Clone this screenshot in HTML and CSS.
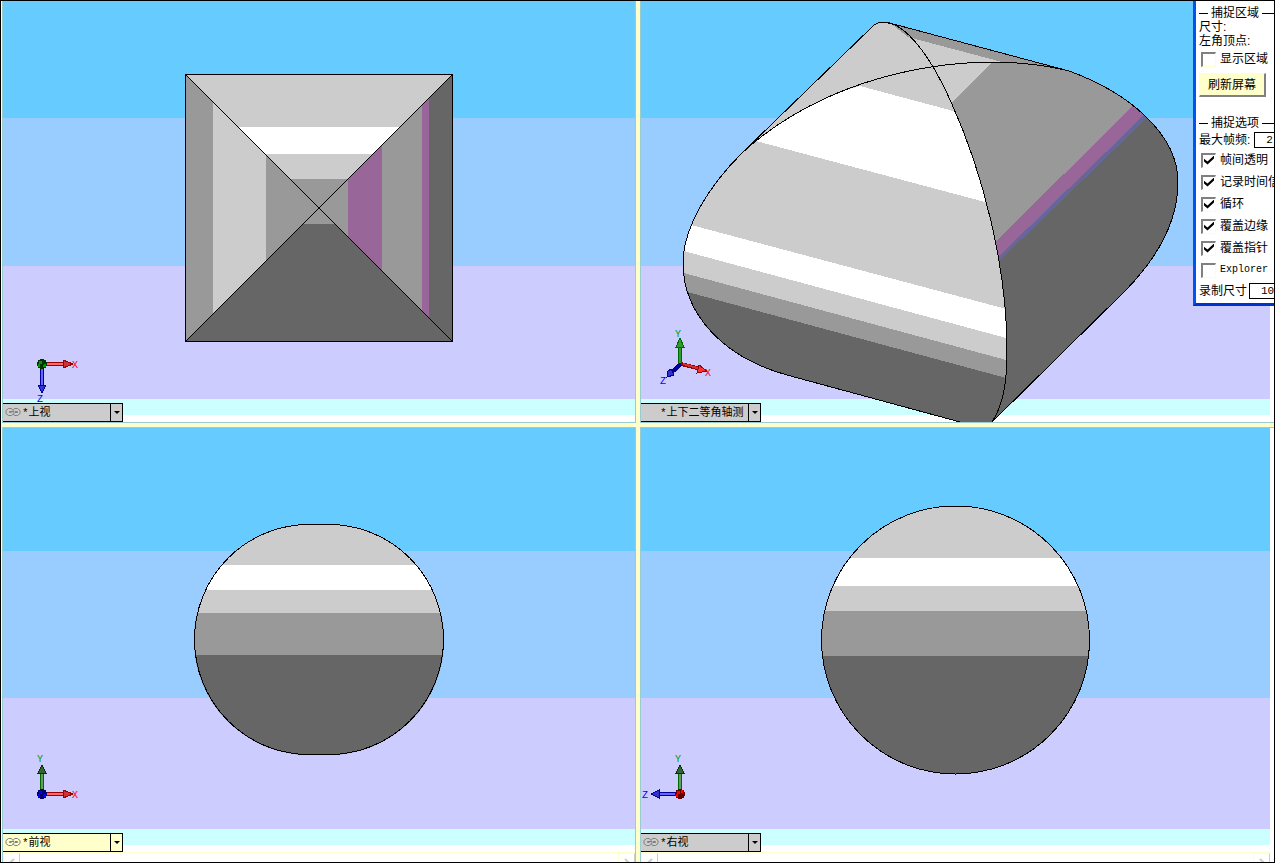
FILE: index.html
```html
<!DOCTYPE html>
<html lang="zh-CN">
<head>
    <meta charset="utf-8">
    <title>四视图</title>
    <link rel="stylesheet" href="styles.css">
</head>
<body>
    <svg class="defs" aria-hidden="true">
        <symbol id="link" viewBox="0 0 16 10">
            <path d="M8 3.500L6.500 1.500H3.500L1 3.500V6.500L3.500 8.500H6.500L9 6.500V4.500H4.500V5.500H6.500" fill="none" stroke="#808080"/>
            <path d="M8 6.500L9.500 8.500H12.500L15 6.500V3.500L12.500 1.500H9.500L8 3.500M10 5.500H12.500V4.500H10" fill="none" stroke="#808080"/>
        </symbol>
    </svg>

    <div class="app">
        <!-- top view -->
        <div class="pane">
            <div class="view upper">
                <div class="band sky"></div>
                <div class="band blue"></div>
                <div class="band lilac"></div>
                <div class="band mint"></div>
                <div class="band white"></div>
                <svg class="model" viewBox="3 1 632 421">
                    <rect x="185" y="74" width="268" height="268" fill="#666"/>
                    <path d="M185 74H453L319 208Z" fill="#ccc"/>
                    <path d="M238 127H400L373 154H265Z" fill="#fff"/>
                    <path d="M290 179H348L319 208Z" fill="#999"/>
                    <path d="M185 74L319 208L185 342Z" fill="#999"/>
                    <path d="M213 102L266 155V261L213 314Z" fill="#ccc"/>
                    <path d="M429 98V318L319 208Z" fill="#969"/>
                    <path d="M422 105V311L382 271V145Z" fill="#999"/>
                    <path d="M348 179V237L319 208Z" fill="#999"/>
                    <path d="M319 208L335 224H303Z" fill="#999"/>
                    <path class="edge" d="M185.500 74.500H452.500V341.500H185.500ZL452.500 341.500M452.500 74.500L185.500 341.500"/>
                </svg>
                <svg class="triad" viewBox="3 322 80 80">
                    <rect x="46" y="362" width="20" height="4" fill="#900"/>
                    <rect x="46" y="363" width="20" height="2" fill="#f66"/>
                    <path d="M63 360L73 364L63 368Z" fill="#c33" stroke="#900"/>
                    <rect x="40" y="368" width="4" height="18" fill="#009"/>
                    <rect x="41" y="368" width="2" height="18" fill="#66f"/>
                    <path d="M38 385H46L42 393Z" fill="#33c" stroke="#009"/>
                    <circle cx="42" cy="364" r="5" fill="#030"/>
                    <path d="M39 361h3v3h-2v3h-2zM44 364h2v3h-3z" fill="#090"/>
                    <text x="72" y="368" fill="#f00">X</text>
                    <text x="37" y="402" fill="#00f">Z</text>
                </svg>
                <div class="picker">
                    <svg class="link"><use href="#link"/></svg>
                    <select aria-label="上视窗口视图"><option>*上视</option></select>
                </div>
            </div>
        </div>

        <!-- dimetric view -->
        <div class="pane with-bar">
            <div class="view upper">
                <div class="band sky"></div>
                <div class="band blue"></div>
                <div class="band lilac"></div>
                <div class="band mint"></div>
                <div class="band white"></div>
                <svg class="model" viewBox="641 1 629 421">
                    <clipPath id="front">
                        <path d="M931 67C855 79 790 109 742 153C708 187 683 228 683 263C683 313 722 357 787 375L960 422H992C1004 404 1007 380 1007 350C1007 265 982 170 951 102Z"/>
                    </clipPath>
                    <clipPath id="side">
                        <path d="M931 67C975 60 1025 60 1069 71C1130 93 1178 135 1178 182C1178 220 1158 257 1126 290L992 422C1004 404 1007 380 1007 350C1007 265 982 170 951 102Z"/>
                    </clipPath>
                    <path d="M742 153L872 27Q877 22 883 22L897 25L1067 71L931 67Z" fill="#ccc"/>
                    <path d="M889 22L897 25L1067 71L1002 62L908 37Z" fill="#999"/>
                    <g clip-path="url(#side)">
                        <rect x="900" y="50" width="290" height="372" fill="#999"/>
                        <path d="M920 50H1003L992 63L949 105L920 80Z" fill="#ccc"/>
                        <path d="M990 247L1135 104L1200 90V422H980Z" fill="#969"/>
                        <path d="M990 265L1145 114L1200 90V422H980Z" fill="#669"/>
                        <path d="M990 270L1148 117L1200 90V422H980Z" fill="#666"/>
                    </g>
                    <g clip-path="url(#front)">
                        <rect x="680" y="60" width="330" height="362" fill="#ccc"/>
                        <path d="M860 86L972 116L1000 206L756 141L740 120Z" fill="#fff"/>
                        <path d="M680 222L1010 310V339L680 250Z" fill="#fff"/>
                        <path d="M680 272L1010 361V422H680Z" fill="#999"/>
                        <path d="M680 290L1010 379V422H680Z" fill="#666"/>
                    </g>
                    <path class="edge" d="M742 153L872 27Q877 22 883 22L897 25L1069 71C1130 93 1178 135 1178 182C1178 220 1158 257 1126 290L992 422M960 422L787 375C722 357 683 313 683 263C683 228 708 187 742 153C790 109 855 79 931 67C975 60 1025 60 1069 71"/>
                    <path class="edge" d="M883 22C905 22 930 55 951 102C982 170 1007 265 1007 350C1007 380 1004 404 992 422"/>
                </svg>
                <svg class="triad" viewBox="641 322 80 80">
                    <path d="M681 364L701 369" stroke="#900" stroke-width="4"/>
                    <path d="M683 364L701 369" stroke="#c33" stroke-width="2"/>
                    <path d="M699 365L707 371L697 373Z" fill="#f33" stroke="#900"/>
                    <rect x="678" y="346" width="4" height="18" fill="#060"/>
                    <rect x="679" y="346" width="2" height="18" fill="#393"/>
                    <path d="M680 338L684 347H676Z" fill="#393" stroke="#060"/>
                    <path d="M681 364L672 372" stroke="#009" stroke-width="4"/>
                    <path d="M671 369L674 375L667 377L668 371Z" fill="#33c" stroke="#009"/>
                    <text x="675" y="337" fill="#090">Y</text>
                    <text x="705" y="376" fill="#f00">X</text>
                    <text x="660" y="384" fill="#00f">Z</text>
                </svg>
                <div class="picker">
                    <select aria-label="轴测窗口视图"><option>*上下二等角轴测</option></select>
                </div>
            </div>
        </div>

        <!-- front view -->
        <div class="pane">
            <div class="view lower">
                <div class="band sky"></div>
                <div class="band blue"></div>
                <div class="band lilac"></div>
                <div class="band mint"></div>
                <div class="band white"></div>
                <svg class="model" viewBox="3 428 632 424">
                    <clipPath id="barrel">
                        <path d="M309 524H329A115 115 0 0 1 444 639V640A115 115 0 0 1 329 755H309A115 115 0 0 1 194 640V639A115 115 0 0 1 309 524Z"/>
                    </clipPath>
                    <g clip-path="url(#barrel)">
                        <rect x="194" y="524" width="250" height="41" fill="#ccc"/>
                        <rect x="194" y="565" width="250" height="25" fill="#fff"/>
                        <rect x="194" y="590" width="250" height="23" fill="#ccc"/>
                        <rect x="194" y="613" width="250" height="42" fill="#999"/>
                        <rect x="194" y="655" width="250" height="100" fill="#666"/>
                    </g>
                    <path class="edge" d="M309 524.500H329A114.500 115 0 0 1 443.500 639V640A114.500 115 0 0 1 329 754.500H309A114.500 115 0 0 1 194.500 640V639A114.500 115 0 0 1 309 524.500Z"/>
                </svg>
                <svg class="triad" viewBox="3 752 80 80">
                    <rect x="46" y="792" width="20" height="4" fill="#900"/>
                    <rect x="46" y="793" width="20" height="2" fill="#f66"/>
                    <path d="M63 790L73 794L63 798Z" fill="#c33" stroke="#900"/>
                    <rect x="40" y="772" width="4" height="18" fill="#060"/>
                    <rect x="41" y="772" width="2" height="18" fill="#696"/>
                    <path d="M42 765L46 773H38Z" fill="#363" stroke="#030"/>
                    <circle cx="42" cy="794" r="5" fill="#006"/>
                    <path d="M39 791h3v3h-2v3h-2zM44 794h2v3h-3z" fill="#00f"/>
                    <text x="37" y="762" fill="#090">Y</text>
                    <text x="72" y="798" fill="#f00">X</text>
                </svg>
                <div class="picker active">
                    <svg class="link"><use href="#link"/></svg>
                    <select aria-label="前视窗口视图"><option>*前视</option></select>
                </div>
            </div>
            <div class="scroll">
                <button class="scroll-btn" aria-label="向左"><svg viewBox="0 0 16 10"><path d="M10 2L5 7L8 10"/></svg></button>
                <button class="scroll-btn" aria-label="向右"><svg viewBox="0 0 16 10"><path d="M6 2L11 7L8 10"/></svg></button>
            </div>
        </div>

        <!-- right view -->
        <div class="pane with-bar">
            <div class="view lower">
                <div class="band sky"></div>
                <div class="band blue"></div>
                <div class="band lilac"></div>
                <div class="band mint"></div>
                <div class="band white"></div>
                <svg class="model" viewBox="641 428 629 424">
                    <clipPath id="disc"><circle cx="955.500" cy="640" r="134"/></clipPath>
                    <g clip-path="url(#disc)">
                        <rect x="821" y="506" width="269" height="52" fill="#ccc"/>
                        <rect x="821" y="558" width="269" height="28" fill="#fff"/>
                        <rect x="821" y="586" width="269" height="25" fill="#ccc"/>
                        <rect x="821" y="611" width="269" height="45" fill="#999"/>
                        <rect x="821" y="656" width="269" height="118" fill="#666"/>
                    </g>
                    <circle class="edge" cx="955.500" cy="640" r="134"/>
                </svg>
                <svg class="triad" viewBox="641 752 80 80">
                    <rect x="658" y="792" width="18" height="4" fill="#009"/>
                    <rect x="658" y="793" width="18" height="2" fill="#66f"/>
                    <path d="M651 794L659 790V798Z" fill="#33c" stroke="#009"/>
                    <rect x="678" y="772" width="4" height="18" fill="#060"/>
                    <rect x="679" y="772" width="2" height="18" fill="#696"/>
                    <path d="M680 765L684 773H676Z" fill="#363" stroke="#030"/>
                    <circle cx="680" cy="794" r="5" fill="#600"/>
                    <path d="M677 791h3v3h-2v3h-2zM681 790h2v3h-2z" fill="#f00"/>
                    <text x="675" y="762" fill="#090">Y</text>
                    <text x="642" y="798" fill="#00f">Z</text>
                </svg>
                <div class="picker">
                    <svg class="link"><use href="#link"/></svg>
                    <select aria-label="右视窗口视图"><option>*右视</option></select>
                </div>
            </div>
            <div class="scroll">
                <button class="scroll-btn" aria-label="向左"><svg viewBox="0 0 16 10"><path d="M10 2L5 7L8 10"/></svg></button>
                <button class="scroll-btn" aria-label="向右"><svg viewBox="0 0 16 10"><path d="M6 2L11 7L8 10"/></svg></button>
            </div>
        </div>

        <!-- capture window -->
        <div class="capture">
            <div class="heading">捕捉区域</div>
            <div class="line">尺寸:</div>
            <div class="line">左角顶点:</div>
            <label class="check"><input type="checkbox">显示区域</label>
            <button class="refresh">刷新屏幕</button>
            <div class="heading">捕捉选项</div>
            <label class="field">最大帧频:<input type="text" value="2"></label>
            <label class="check"><input type="checkbox" checked>帧间透明</label>
            <label class="check"><input type="checkbox" checked>记录时间信</label>
            <label class="check"><input type="checkbox" checked>循环</label>
            <label class="check"><input type="checkbox" checked>覆盖边缘</label>
            <label class="check"><input type="checkbox" checked>覆盖指针</label>
            <label class="check latin"><input type="checkbox">Explorer</label>
            <label class="field size">录制尺寸<input type="text" value="10"></label>
        </div>
    </div>
</body>
</html>
```
FILE: styles.css
```css
* {
    box-sizing: border-box;
}

body {
    margin: 0;
    height: 100vh;
    overflow: hidden;
    font-family: "Liberation Sans", "Noto Sans CJK SC", sans-serif;
    font-size: 12px;
    color: #000;
}

.defs {
    display: none;
}

.app {
    position: relative;
    display: grid;
    grid-template-columns: 635fr 634fr;
    grid-template-rows: 422fr 435fr;
    gap: 4px;
    height: 100%;
    border: 1px solid #000;
    background-color: #ffffcc;
}

.pane {
    display: flex;
    flex-direction: column;
    min-width: 0;
    min-height: 0;
    border-left: 1px solid #99cccc;
    border-bottom: 1px solid #99cccc;
    background-color: #fff;
}

.pane:nth-child(odd) {
    margin-left: 1px;
    border-right: 1px solid #99cccc;
    box-shadow: -1px 0 #fff;
}

.pane:nth-child(n+3) {
    border-top: 1px solid #99cccc;
    border-bottom: none;
}

.with-bar {
    padding-right: 4px;
}

.view {
    position: relative;
    display: flex;
    flex: 1;
    flex-direction: column;
    min-height: 0;
}

/* stepped background */
.band {
    flex-basis: 0;
}

.sky {
    flex-grow: 117;
    background-color: #66ccff;
}

.blue {
    flex-grow: 148;
    background-color: #99ccff;
}

.lilac {
    flex-grow: 133;
    background-color: #ccccff;
}

.mint {
    flex-grow: 16;
    background-color: #ccffff;
}

.white {
    flex-grow: 7;
    background-color: #fff;
}

.lower .sky {
    flex-grow: 123;
}

.lower .blue {
    flex-grow: 147;
}

.lower .lilac {
    flex-grow: 131;
}

.model {
    position: absolute;
    top: 0;
    left: 0;
    width: 100%;
    height: 100%;
    shape-rendering: crispEdges;
}

.edge {
    fill: none;
    stroke: #000;
    stroke-width: 1px;
}

.triad {
    position: absolute;
    left: 0;
    bottom: 20px;
    width: 80px;
    height: 80px;
    overflow: visible;
    font-family: "Liberation Mono", monospace;
    font-size: 10px;
    shape-rendering: crispEdges;
}

/* view name drop-down */
.picker {
    position: absolute;
    left: 0;
    bottom: 0;
    width: 120px;
    height: 19px;
    border: 1px solid #000;
    border-left: none;
    background-color: #ccc;
}

.picker.active {
    background-color: #ffffcc;
}

.picker select {
    display: block;
    width: 100%;
    height: 17px;
    padding: 2px 0 0 19px;
    border: none;
    appearance: none;
    background: none;
    font-family: "Liberation Mono", "Noto Sans CJK SC", monospace;
    font-size: 11px;
    line-height: 15px;
    color: #000;
}

.picker::before {
    content: "";
    position: absolute;
    right: 11px;
    width: 1px;
    height: 100%;
    background-color: #000;
}

.picker::after {
    content: "";
    position: absolute;
    top: 7px;
    right: 2px;
    border: 3px solid transparent;
    border-top-color: #000;
    border-bottom: none;
    pointer-events: none;
}

.link {
    position: absolute;
    top: 3px;
    left: 2px;
    width: 16px;
    height: 10px;
}

.scroll {
    display: flex;
    justify-content: space-between;
    height: 10px;
    border-top: 1px solid #ffffcc;
    overflow: hidden;
}

.scroll-btn {
    width: 17px;
    height: 17px;
    padding: 0;
    border: 1px solid #ffffcc;
    border-right-color: #ccc;
    background-color: #fff;
}

.scroll-btn svg {
    display: block;
    width: 16px;
    height: 10px;
    fill: none;
    stroke: #ccc;
    stroke-width: 2px;
}

/* screen capture window */
.capture {
    position: absolute;
    top: 0;
    right: 0;
    width: 81px;
    padding: 5px 0 3px 3px;
    border-left: 3px solid #0055ee;
    border-bottom: 3px solid #0033cc;
    background-color: #fff;
    overflow: hidden;
    white-space: nowrap;
    line-height: 14px;
}

.heading {
    display: flex;
    align-items: center;
    gap: 3px;
}

.heading::before,
.heading::after {
    content: "";
    width: 9px;
    height: 1px;
    background-color: #000;
}

.heading::after {
    flex: 1;
}

.check {
    display: flex;
    align-items: center;
    gap: 4px;
    height: 22px;
    padding-left: 2px;
}

.check input {
    flex: none;
    width: 15px;
    height: 15px;
    margin: 0;
    border: 1px solid #ffffcc;
    border-top: 2px solid #808080;
    border-left: 2px solid #808080;
    appearance: none;
    background-color: #fff;
}

.check input:checked::before {
    content: "";
    display: block;
    width: 10px;
    height: 9px;
    margin: 1px;
    background-color: #000;
    clip-path: polygon(0 35%, 35% 68%, 100% 0, 100% 32%, 35% 100%, 0 68%);
}

.latin {
    font-family: "Liberation Mono", monospace;
    font-size: 10px;
}

.refresh {
    display: block;
    width: 67px;
    height: 24px;
    margin: 3px 0 19px;
    padding: 0;
    border: 1px solid #ffffcc;
    border-right: 2px solid #808080;
    border-bottom: 2px solid #808080;
    background-color: #ffffcc;
    font: inherit;
}

.field {
    display: flex;
    align-items: center;
    gap: 4px;
    height: 19px;
}

.field input {
    flex: none;
    width: 60px;
    height: 16px;
    padding: 0 0 0 11px;
    border: 1px solid #000;
    background-color: #fff;
    font-family: "Liberation Mono", monospace;
    font-size: 11px;
}

.field.size {
    gap: 2px;
}
```
